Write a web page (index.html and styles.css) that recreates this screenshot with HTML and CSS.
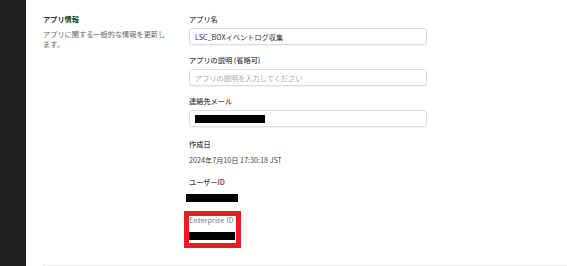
FILE: index.html
```html
<!DOCTYPE html>
<html lang="ja">
<head>
    <meta charset="UTF-8">
    <meta name="viewport" content="width=device-width, initial-scale=1.0">
    <title>アプリ情報</title>
    <link rel="stylesheet" href="styles.css">
</head>
<body>
    <div class="sidebar"></div>

    <div class="main">
        <div class="section">
            <div class="section-info">
                <h2>アプリ情報</h2>
                <p>アプリに関する一般的な情報を更新します。</p>
            </div>

            <div class="section-fields">
                <div class="form-group">
                    <label for="appName">アプリ名</label>
                    <input type="text" id="appName" value="LSC_BOXイベントログ収集">
                </div>

                <div class="form-group">
                    <label for="appDesc">アプリの説明 (省略可)</label>
                    <input type="text" id="appDesc" placeholder="アプリの説明を入力してください">
                </div>

                <div class="form-group">
                    <label for="contact">連絡先メール</label>
                    <div class="fake-input"><span class="redact email-redact"></span></div>
                </div>

                <div class="form-group static first-static">
                    <label>作成日</label>
                    <div class="value">2024年7月10日 17:30:18 JST</div>
                </div>

                <div class="form-group static">
                    <label>ユーザーID</label>
                    <div class="value"><span class="redact user-redact"></span></div>
                </div>

                <div class="form-group static highlighted">
                    <label class="muted">Enterprise ID</label>
                    <div class="value"><span class="redact enterprise-redact"></span></div>
                    <div class="mark"></div>
                </div>
            </div>
        </div>
    </div>
</body>
</html>
```

FILE: styles.css
```css
body {
    font-family: "Noto Sans CJK JP", "Noto Sans", sans-serif;
    font-size: 7.2px;
    background-color: white;
    margin: 0;
    padding: 0;
    display: flex;
    height: 100vh;
    overflow: hidden;
}

.sidebar {
    width: 26px;
    background-color: #222;
    flex-shrink: 0;
}

.main {
    flex: 1;
    padding-left: 17px;
}

.section {
    display: flex;
    padding-top: 14px;
    height: 266px;
    box-sizing: border-box;
    border-bottom: 1px solid #eee;
}

.section-info {
    width: 146px;
    flex-shrink: 0;
}

.section-info h2 {
    margin: 0 0 5px;
    font-size: 7.2px;
    line-height: 10px;
    font-weight: bold;
    color: #333;
}

.section-info p {
    margin: 0;
    width: 126px;
    line-height: 10px;
    color: #666;
}

.section-fields {
    width: 238px;
}

.form-group {
    margin-bottom: 10px;
    position: relative;
}

label {
    display: block;
    margin-bottom: 4px;
    line-height: 10px;
    font-weight: 500;
    color: #444;
}

input[type="text"],
.fake-input {
    display: block;
    width: 100%;
    height: 17px;
    padding: 0 5px;
    border: 1px solid #ddd;
    border-radius: 3px;
    box-shadow: 0 1px 1px rgba(0, 0, 0, 0.05);
    box-sizing: border-box;
    font-family: inherit;
    font-size: 7.2px;
    color: #333;
    margin: 0;
}

input::placeholder {
    color: #aaa;
}

.fake-input {
    display: flex;
    align-items: center;
}

.static .value {
    line-height: 14px;
    height: 14px;
    color: #444;
    display: flex;
    align-items: center;
}

.first-static {
    margin-top: 12px;
}

.redact {
    display: inline-block;
    height: 8px;
    background-color: #000;
}

.email-redact {
    width: 70px;
}

.user-redact {
    width: 52px;
    margin-left: -3px;
}

.enterprise-redact {
    width: 47px;
    margin-left: -1px;
}

.muted {
    color: #8b90a0;
}

.mark {
    position: absolute;
    left: -5px;
    top: -4px;
    width: 57px;
    height: 37px;
    border: 5px solid #ed1c24;
    box-sizing: border-box;
}
```
